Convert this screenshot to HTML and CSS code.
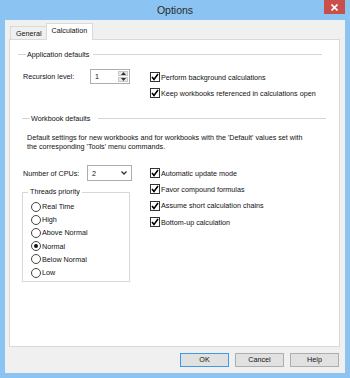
FILE: index.html
```html
<!DOCTYPE html>
<html lang="en">
<head>
  <meta charset="UTF-8" />
  <title>Options</title>
  <link rel="stylesheet" href="styles.css">
</head>
<body>
  <div class="window">
    <div class="titlebar">
      <span class="title-spacer"></span>
      <span class="title">Options</span>
      <span class="close">
        <svg width="7" height="7" viewBox="0 0 7 7"><path d="M0.5 0.5 L6.5 6.5 M6.5 0.5 L0.5 6.5" stroke="#fff" stroke-width="1.6"/></svg>
      </span>
    </div>

    <div class="dialog">
      <div class="tabs">
        <span class="tab">General</span>
        <span class="tab active">Calculation</span>
      </div>

      <div class="panel">
        <div class="group-head app-head">
          <span class="line lead"></span>
          <span class="head-text">Application defaults</span>
          <span class="line"></span>
        </div>

        <div class="row app-row">
          <div class="left">
            <span class="field-label">Recursion level:</span>
            <span class="spinner">
              <span class="spin-val">1</span>
              <span class="spin-btns">
                <span class="spin-btn"><svg width="5" height="3" viewBox="0 0 5 3"><path d="M0 3 L2.5 0 L5 3 Z" fill="#333"/></svg></span>
                <span class="spin-btn"><svg width="5" height="3" viewBox="0 0 5 3"><path d="M0 0 L2.5 3 L5 0 Z" fill="#333"/></svg></span>
              </span>
            </span>
          </div>
          <div class="checks app-checks">
            <div class="check"><span class="box"><svg width="8" height="8" viewBox="0 0 8 8"><path d="M1 4 L3 6.5 L7 1" fill="none" stroke="#000" stroke-width="1.6"/></svg></span>Perform background calculations</div>
            <div class="check"><span class="box"><svg width="8" height="8" viewBox="0 0 8 8"><path d="M1 4 L3 6.5 L7 1" fill="none" stroke="#000" stroke-width="1.6"/></svg></span>Keep workbooks referenced in calculations open</div>
          </div>
        </div>

        <div class="group-head wb-head">
          <span class="line lead"></span>
          <span class="head-text">Workbook defaults</span>
          <span class="line"></span>
        </div>

        <p class="desc">Default settings for new workbooks and for workbooks with the 'Default' values set with<br>the corresponding 'Tools' menu commands.</p>

        <div class="row wb-row">
          <div class="left">
            <div class="cpu-row">
              <span class="field-label">Number of CPUs:</span>
              <span class="select">
                <span>2</span>
                <svg width="6" height="4" viewBox="0 0 6 4"><path d="M0.5 0.5 L3 3 L5.5 0.5" fill="none" stroke="#333" stroke-width="1.3"/></svg>
              </span>
            </div>
            <fieldset class="priority">
              <legend>Threads priority</legend>
              <div class="radio"><span class="dot"></span>Real Time</div>
              <div class="radio"><span class="dot"></span>High</div>
              <div class="radio"><span class="dot"></span>Above Normal</div>
              <div class="radio"><span class="dot on"></span>Normal</div>
              <div class="radio"><span class="dot"></span>Below Normal</div>
              <div class="radio"><span class="dot"></span>Low</div>
            </fieldset>
          </div>
          <div class="checks wb-checks">
            <div class="check"><span class="box"><svg width="8" height="8" viewBox="0 0 8 8"><path d="M1 4 L3 6.5 L7 1" fill="none" stroke="#000" stroke-width="1.6"/></svg></span>Automatic update mode</div>
            <div class="check"><span class="box"><svg width="8" height="8" viewBox="0 0 8 8"><path d="M1 4 L3 6.5 L7 1" fill="none" stroke="#000" stroke-width="1.6"/></svg></span>Favor compound formulas</div>
            <div class="check"><span class="box"><svg width="8" height="8" viewBox="0 0 8 8"><path d="M1 4 L3 6.5 L7 1" fill="none" stroke="#000" stroke-width="1.6"/></svg></span>Assume short calculation chains</div>
            <div class="check"><span class="box"><svg width="8" height="8" viewBox="0 0 8 8"><path d="M1 4 L3 6.5 L7 1" fill="none" stroke="#000" stroke-width="1.6"/></svg></span>Bottom-up calculation</div>
          </div>
        </div>
      </div>

      <div class="buttons">
        <span class="btn default">OK</span>
        <span class="btn">Cancel</span>
        <span class="btn">Help</span>
      </div>
    </div>
  </div>
</body>
</html>
```

FILE: styles.css
```css
body {
  margin: 0;
  font-family: "Liberation Sans", Arial, sans-serif;
  font-size: 7.2px;
  color: #111;
}
.window {
  width: 350px;
  height: 378px;
  background-color: #8bc4f3;
  display: flex;
  flex-direction: column;
}
.titlebar {
  height: 20px;
  display: flex;
  align-items: flex-start;
}
.title-spacer {
  width: 26px;
}
.title {
  flex: 1;
  text-align: center;
  font-size: 10.5px;
  line-height: 20px;
  color: #2a2a2a;
}
.close {
  width: 21px;
  height: 14px;
  margin-right: 5px;
  background-color: #c9504a;
  display: flex;
  align-items: center;
  justify-content: center;
}
.dialog {
  flex: 1;
  margin: 0 5px 5px;
  background-color: #f0f0f0;
  display: flex;
  flex-direction: column;
}
.tabs {
  display: flex;
  align-items: flex-end;
  padding: 4px 0 0 5px;
  height: 15px;
}
.tab {
  height: 12px;
  padding: 0 4px 0 5px;
  line-height: 13px;
  border: 1px solid #d9d9d9;
  border-bottom: none;
  border-right: none;
  background-color: #f0f0f0;
}
.tab.active {
  height: 16px;
  margin-bottom: -1px;
  padding: 0 5px;
  line-height: 14px;
  background-color: #fff;
  border-right: 1px solid #d9d9d9;
  position: relative;
  z-index: 1;
}
.panel {
  flex: 1;
  margin: 0 5px 0 4px;
  background-color: #fff;
  border: 1px solid #d9d9d9;
}
.group-head {
  display: flex;
  align-items: center;
  height: 12px;
}
.group-head .line {
  flex: 1;
  height: 1px;
  background-color: #d5d5d5;
}
.group-head .line.lead {
  flex: none;
  width: 8px;
}
.head-text {
  padding: 0 4px 0 1px;
}
.app-head {
  margin: 8px 17px 0 8px;
}
.wb-head {
  margin: 12px 13px 0 12px;
}
.wb-head .head-text {
  padding: 0 8px 0 1px;
}
.row {
  display: flex;
}
.left {
  width: 107px;
  padding-left: 13px;
}
.app-row {
  margin-top: 9px;
}
.app-row .left {
  display: flex;
  justify-content: space-between;
  align-items: center;
  height: 15px;
}
.spinner {
  width: 38px;
  height: 13px;
  border: 1px solid #abadb3;
  display: flex;
  justify-content: space-between;
}
.spin-val {
  padding-left: 4px;
  line-height: 13px;
}
.spin-btns {
  width: 10px;
  display: flex;
  flex-direction: column;
  gap: 1px;
  padding: 1px 1px 1px 0;
}
.spin-btn {
  flex: 1;
  background-color: #e6e6e6;
  border: 1px solid #c8c8c8;
  display: flex;
  align-items: center;
  justify-content: center;
}
.checks {
  margin-left: 20px;
}
.app-checks {
  padding-top: 1px;
  display: flex;
  flex-direction: column;
  gap: 2px;
}
.check {
  height: 14px;
  display: flex;
  align-items: center;
}
.wb-checks .check {
  height: 16.3px;
}
.box {
  width: 8px;
  height: 8px;
  border: 1px solid #333;
  background-color: #fff;
  margin-right: 1px;
  display: flex;
  align-items: center;
  justify-content: center;
}
.desc {
  margin: 9px 0 0 17px;
  line-height: 9px;
  white-space: nowrap;
}
.wb-row {
  margin-top: 14px;
}
.cpu-row {
  height: 16px;
  display: flex;
  justify-content: space-between;
  align-items: center;
}
.select {
  width: 35px;
  height: 14px;
  padding: 0 4px 0 4px;
  border: 1px solid #abadb3;
  display: flex;
  justify-content: space-between;
  align-items: center;
  box-sizing: content-box;
  margin-right: -2px;
}
.select span {
  margin-right: auto;
}
.priority {
  margin: 6px 0 0 -1px;
  padding: 3px 0 2px 8px;
  border: 1px solid #d8d8d8;
  min-width: 0;
}
.priority legend {
  padding: 0 2px;
  margin-left: -3px;
  line-height: 10px;
}
.radio {
  height: 13.2px;
  display: flex;
  align-items: center;
}
.dot {
  width: 8px;
  height: 8px;
  border: 1px solid #444;
  border-radius: 50%;
  background-color: #fff;
  margin-right: 1px;
  display: flex;
  align-items: center;
  justify-content: center;
}
.dot.on::after {
  content: "";
  width: 4px;
  height: 4px;
  border-radius: 50%;
  background-color: #111;
}
.buttons {
  display: flex;
  justify-content: flex-end;
  gap: 6px;
  margin: 6px 6px 6px 0;
}
.btn {
  width: 47px;
  height: 12px;
  line-height: 12px;
  text-align: center;
  background-color: #e1e1e1;
  border: 1px solid #adadad;
}
.btn.default {
  border-color: #3c9ae8;
}
```
